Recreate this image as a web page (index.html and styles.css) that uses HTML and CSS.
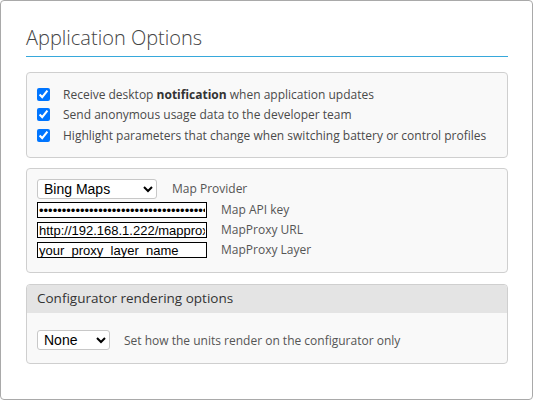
FILE: index.html
```html
<!DOCTYPE html>
<html>
<head>
<meta charset="utf-8">
<link rel="stylesheet" href="styles.css">
</head>
<body>
<div class="dialog">
  <h1 class="title">Application Options</h1>
  <div class="box checks">
    <label class="row"><input type="checkbox" checked><span>Receive desktop <b>notification</b> when application updates</span></label>
    <label class="row"><input type="checkbox" checked><span>Send anonymous usage data to the developer team</span></label>
    <label class="row"><input type="checkbox" checked><span>Highlight parameters that change when switching battery or control profiles</span></label>
  </div>
  <div class="box maps">
    <div class="frow first"><select class="provider"><option>Bing Maps</option></select><span class="lbl">Map Provider</span></div>
    <div class="frow"><input class="txt" type="password" value="••••••••••••••••••••••••••••••••••••••••"><span class="lbl">Map API key</span></div>
    <div class="frow"><input class="txt" type="text" value="http://192.168.1.222/mapproxy/service?"><span class="lbl">MapProxy URL</span></div>
    <div class="frow"><input class="txt" type="text" value="your_proxy_layer_name"><span class="lbl">MapProxy Layer</span></div>
  </div>
  <div class="box render">
    <div class="head">Configurator rendering options</div>
    <div class="body">
      <select class="units"><option>None</option></select><span class="lbl2">Set how the units render on the configurator only</span>
    </div>
  </div>
</div>
</body>
</html>
```
FILE: styles.css
```css
html, body { margin: 0; padding: 0; background: #fff; }
.dialog {
  box-sizing: border-box;
  width: 533px;
  height: 400px;
  border: 1px solid #a9a9a9;
  border-radius: 4px;
  padding: 23px 25px 0 25px;
  font-family: "Open Sans", sans-serif;
  color: #4a4a4a;
  overflow: hidden;
}
.title {
  margin: 0;
  font-weight: 300;
  font-size: 20px;
  line-height: 28px;
  color: #444;
  padding-bottom: 4px;
  border-bottom: 1px solid #37a8db;
  width: 482px;
}
.box {
  width: 482px;
  box-sizing: border-box;
  background: #f9f9f9;
  border: 1px solid #cfcfcf;
  border-radius: 4px;
}
.checks { padding: 11px 10px 7px 10px; margin-top: 15px; height: 86px; }
.row { display: flex; align-items: center; height: 20.5px; font-size: 12px; }
.row input { margin: 0 13px 0 0; width: 13px; height: 13px; }
.row b { font-weight: 700; color: #333; }
.maps { padding: 10px 10px 0 10px; height: 105px; margin-top: 10px; }
.frow { display: flex; align-items: center; font-size: 12px; height: 16px; line-height: 16px; }
.frow.first { height: 20px; }
.frow + .frow { margin-top: 4px; }
.frow.first + .frow { margin-top: 3px; }
.provider {
  width: 120px; height: 20px; margin: 0 15px 0 0;
  font-family: "Liberation Sans", Arial, sans-serif; font-size: 14px; color: #000;
  border: 1px solid #c8c8c8; border-radius: 3px; background: #fff; padding: 0 0 0 2px;
}
.txt {
  box-sizing: border-box;
  width: 170px; height: 16px; margin: 0 14px 0 0; padding: 0 1px;
  border: 1px solid #000; background: #fff;
  font-family: "Liberation Sans", Arial, sans-serif; font-size: 13px; color: #000;
}
.lbl { color: #555; }
.render { margin-top: 11px; height: 80px; overflow: hidden; }
.head {
  background: #e4e4e4; height: 28px; line-height: 27px;
  padding-left: 10px; font-size: 13.5px; color: #333;
  border-radius: 3px 3px 0 0;
}
.body { display: flex; align-items: center; padding: 17px 10px 0 10px; font-size: 12px; }
.units {
  width: 73px; height: 20px; margin: 0 14px 0 0;
  font-family: "Liberation Sans", Arial, sans-serif; font-size: 14px; color: #000;
  border: 1px solid #c8c8c8; border-radius: 3px; background: #fff; padding: 0 0 0 2px;
}
.lbl2 { color: #555; }
```
